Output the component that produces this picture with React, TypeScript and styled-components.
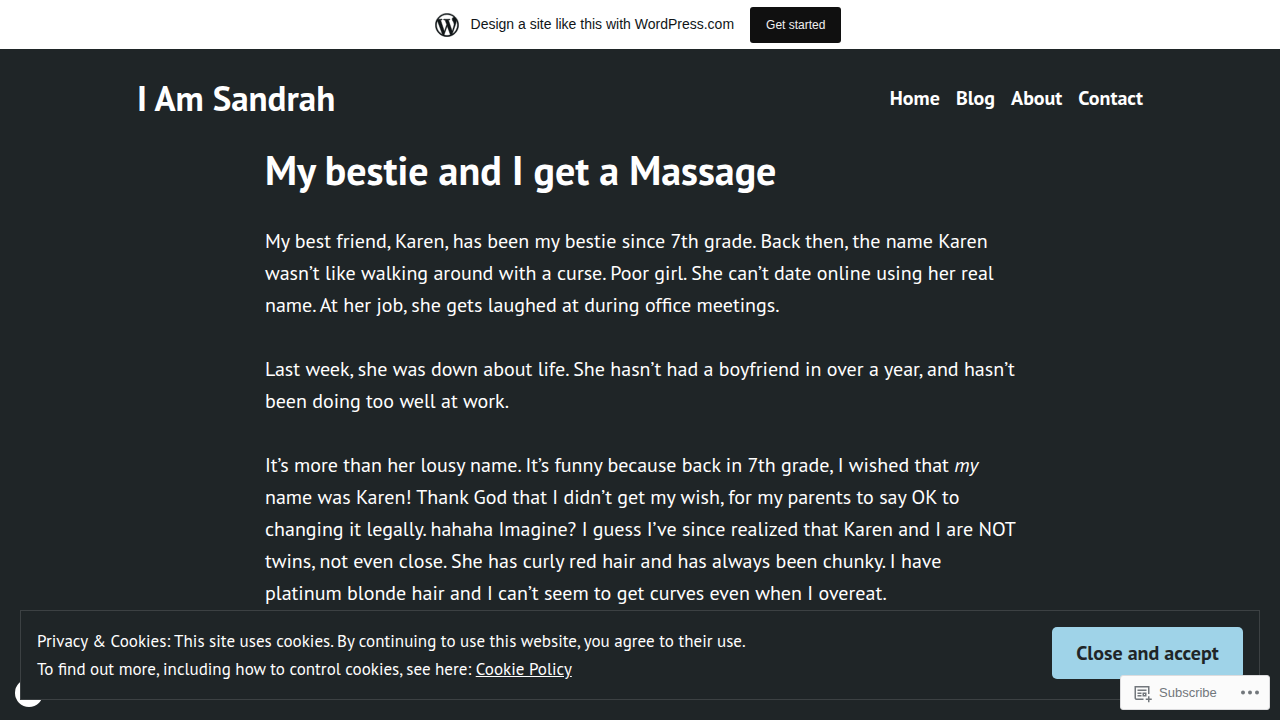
import React from 'react';
import styled, { createGlobalStyle } from 'styled-components';
import { FaWordpressSimple } from 'react-icons/fa';

const GlobalStyle = createGlobalStyle`
  *, *::before, *::after { box-sizing: border-box; }
  html { overflow: hidden; background: #1f2527; }
  body {
    margin: 0;
    background: #1f2527;
    color: #ffffff;
    font-family: 'PT Sans', Lato, 'Noto Sans', sans-serif;
    font-size: 20px;
    line-height: 32px;
  }
`;

const PromoBar = styled.div`
  display: flex;
  align-items: center;
  justify-content: center;
  height: 49px;
  padding: 0 4px 0 0;
  background: #ffffff;
  color: #101517;
  font-family: 'Liberation Sans', Arial, sans-serif;
  font-size: 14px;
  line-height: 19px;
`;

const WordPressLogo = styled(FaWordpressSimple)`
  stroke: currentColor;
  stroke-width: 10px;
`;

const PromoText = styled.span`
  margin: 0 16px 0 12px;
`;

const PromoButton = styled.button`
  height: 36px;
  padding: 0 16px;
  border: 0;
  border-radius: 3px;
  background: #101010;
  color: #f0f0f0;
  font-family: inherit;
  font-size: 12px;
`;

const SiteHeader = styled.header`
  display: flex;
  align-items: center;
  justify-content: space-between;
  max-width: 1006px;
  margin: 0 auto;
  padding-top: 27px;
`;

const SiteTitle = styled.a`
  color: inherit;
  font-size: 35px;
  font-weight: 700;
  line-height: 44px;
  text-decoration: none;
`;

const Nav = styled.nav`
  display: flex;
  gap: 16px;
`;

const NavLink = styled.a`
  color: inherit;
  font-weight: 700;
  text-decoration: none;
`;

const Article = styled.article`
  max-width: 750px;
  margin: 0 auto;
`;

const Title = styled.h1`
  margin: 24px 0 29px;
  font-size: 40px;
  font-weight: 700;
  line-height: 52px;
`;

const Paragraph = styled.p`
  margin: 0 0 32px;
`;

const Bubble = styled.div`
  position: fixed;
  left: 15px;
  bottom: 13px;
  width: 28px;
  height: 28px;
  border-radius: 50%;
  background: #ffffff;
`;

const CookieBanner = styled.form`
  position: fixed;
  left: 20px;
  right: 20px;
  bottom: 20px;
  display: flex;
  align-items: flex-start;
  justify-content: space-between;
  padding: 16px;
  border: 1px solid #3c4143;
  background: #1f2527;
  font-size: 17px;
  line-height: 28px;
`;

const CookieLink = styled.a`
  color: inherit;
  text-decoration: underline;
`;

const AcceptButton = styled.button`
  width: 191px;
  height: 52px;
  padding: 0;
  border: 0;
  border-radius: 5px;
  background: #9fd3e8;
  color: #1f2527;
  font-family: inherit;
  font-size: 20px;
  font-weight: 700;
`;

const ActionBar = styled.div`
  position: fixed;
  right: 10px;
  bottom: 10px;
  display: flex;
  align-items: center;
  justify-content: space-between;
  width: 150px;
  height: 35px;
  padding: 0 8px 0 11px;
  border: 1px solid #dcdcde;
  border-radius: 3px;
  background: #fbfbfb;
`;

const ActionButton = styled.button`
  display: flex;
  align-items: center;
  gap: 7px;
  padding: 0;
  border: 0;
  background: none;
  color: #72777c;
  font-family: 'Liberation Sans', Arial, sans-serif;
  font-size: 13px;
  line-height: 20px;
`;

const SubscribeIcon = () => (
  <svg width="20" height="20" viewBox="0 0 20 20" fill="currentColor" aria-hidden="true">
    <path
      fillRule="evenodd"
      clipRule="evenodd"
      d="m4 4.5h12v6.5h1.5v-6.5-1.5h-1.5-12-1.5v1.5 10.5c0 1.1046.89543 2 2 2h7v-1.5h-7c-.27614 0-.5-.2239-.5-.5zm10.5 2h-9v1.5h9zm-5 3h-4v1.5h4zm3.5 1.5h-1v1h1zm-1-1.5h-1.5v1.5 1 1.5h1.5 1 1.5v-1.5-1-1.5h-1.5zm-2.5 2.5h-4v1.5h4zm6.5 1.25h1.5v2.25h2.25v1.5h-2.25v2.25h-1.5v-2.25h-2.25v-1.5h2.25z"
    />
  </svg>
);

const MoreIcon = () => (
  <svg width="22" height="20" viewBox="0 0 22 20" fill="currentColor" aria-hidden="true">
    <circle cx="4" cy="9.5" r="2" />
    <circle cx="11" cy="9.5" r="2" />
    <circle cx="18" cy="9.5" r="2" />
  </svg>
);

const links = ['Home', 'Blog', 'About', 'Contact'];

export default function App() {
  return (
    <>
      <GlobalStyle />
      <PromoBar>
        <WordPressLogo size={24} aria-hidden="true" />
        <PromoText>Design a site like this with WordPress.com</PromoText>
        <PromoButton type="button">Get started</PromoButton>
      </PromoBar>
      <SiteHeader>
        <SiteTitle href="#">I Am Sandrah</SiteTitle>
        <Nav>
          {links.map((label) => (
            <NavLink key={label} href="#">{label}</NavLink>
          ))}
        </Nav>
      </SiteHeader>
      <Article>
        <Title>My bestie and I get a Massage</Title>
        <Paragraph>
          My best friend, Karen, has been my bestie since 7th grade. Back then, the name Karen
          wasn’t like walking around with a curse. Poor girl. She can’t date online using her real
          name. At her job, she gets laughed at during office meetings.
        </Paragraph>
        <Paragraph>
          Last week, she was down about life. She hasn’t had a boyfriend in over a year, and hasn’t
          been doing too well at work.
        </Paragraph>
        <Paragraph>
          It’s more than her lousy name. It’s funny because back in 7th grade, I wished that{' '}
          <em>my</em> name was Karen! Thank God that I didn’t get my wish, for my parents to say OK
          to changing it legally. hahaha Imagine? I guess I’ve since realized that Karen and I are
          NOT twins, not even close. She has curly red hair and has always been chunky. I have
          platinum blonde hair and I can’t seem to get curves even when I overeat.
        </Paragraph>
      </Article>
      <Bubble />
      <CookieBanner>
        <div>
          Privacy &amp; Cookies: This site uses cookies. By continuing to use this website, you agree to their use.
          <br />
          To find out more, including how to control cookies, see here:{' '}
          <CookieLink href="#">Cookie Policy</CookieLink>
        </div>
        <AcceptButton type="button">Close and accept</AcceptButton>
      </CookieBanner>
      <ActionBar>
        <ActionButton type="button">
          <SubscribeIcon />
          Subscribe
        </ActionButton>
        <ActionButton type="button" aria-label="More options">
          <MoreIcon />
        </ActionButton>
      </ActionBar>
    </>
  );
}
